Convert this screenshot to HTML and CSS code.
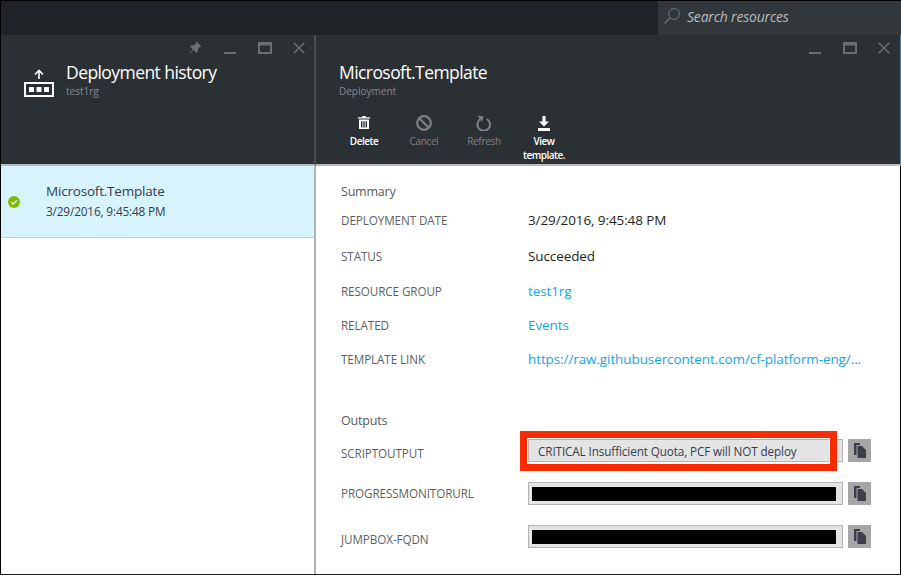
FILE: index.html
```html
<!DOCTYPE html>
<html lang="en">
<head>
<meta charset="utf-8">
<title>Deployment history</title>
<link rel="stylesheet" href="styles.css">
</head>
<body>
<div class="portal">
  <header class="topbar">
    <div class="search">
      <svg class="search-icon" width="16" height="16" viewBox="0 0 16 16"><circle cx="10" cy="6" r="5.4" fill="none" stroke="#73787b" stroke-width="1"/><path d="M6.2 9.8 L0.5 15.5" stroke="#73787b" stroke-width="1.2"/></svg>
      <span class="search-text">Search resources</span>
    </div>
  </header>
  <div class="blades">
    <section class="blade blade-left">
      <div class="blade-head head-left">
        <div class="win-controls">
          <svg class="win-icon pin" width="14" height="14" viewBox="0 0 14 14"><path d="M8.5 0.5 L13.5 5.5 L11.8 6 L9.8 8 L9.6 11 L8.5 12 L2 5.5 L3 4.4 L6 4.2 L8 2.2 Z M4.5 8.5 L1 13 L5.5 9.5 Z" fill="#6b6f72"/></svg>
          <svg class="win-icon min" width="12" height="14" viewBox="0 0 12 14"><rect x="0" y="11" width="12" height="2" fill="#6b6f72"/></svg>
          <svg class="win-icon max" width="14" height="12" viewBox="0 0 14 12"><path d="M0 0H14V12H0Z M2 3.5V10H12V3.5Z" fill="#6b6f72" fill-rule="evenodd"/></svg>
          <svg class="win-icon close" width="12" height="12" viewBox="0 0 12 12"><path d="M0.7 0.7 L11.3 11.3 M11.3 0.7 L0.7 11.3" stroke="#6b6f72" stroke-width="1.6"/></svg>
        </div>
        <div class="title-row">
          <svg class="deploy-icon" width="30" height="28" viewBox="0 0 30 28"><path d="M15 10 V1.5 M11 5.5 L15 1.5 L19 5.5" fill="none" stroke="#fff" stroke-width="1.6"/><path d="M0 13H30V28H0Z M2 15V26H28V15Z" fill="#fff" fill-rule="evenodd"/><rect x="5" y="18" width="5" height="5" fill="#fff"/><rect x="12.5" y="18" width="5" height="5" fill="#fff"/><rect x="20" y="18" width="5" height="5" fill="#fff"/></svg>
          <div>
            <h1 class="blade-title">Deployment history</h1>
            <p class="blade-sub">test1rg</p>
          </div>
        </div>
      </div>
      <div class="blade-body">
        <div class="item">
          <svg class="ok-icon" width="12" height="12" viewBox="0 0 13 13"><circle cx="6.5" cy="6.5" r="6.5" fill="#7fba00"/><path d="M3.5 6.8 L5.6 8.8 L9.6 4.6" fill="none" stroke="#fff" stroke-width="1.5"/></svg>
          <div class="item-text">
            <div class="item-name">Microsoft.Template</div>
            <div class="item-date">3/29/2016, 9:45:48 PM</div>
          </div>
        </div>
      </div>
    </section>
    <section class="blade blade-right">
      <div class="blade-head head-right">
        <div class="win-controls">
          <svg class="win-icon min" width="12" height="14" viewBox="0 0 12 14"><rect x="0" y="11" width="12" height="2" fill="#6b6f72"/></svg>
          <svg class="win-icon max" width="14" height="12" viewBox="0 0 14 12"><path d="M0 0H14V12H0Z M2 3.5V10H12V3.5Z" fill="#6b6f72" fill-rule="evenodd"/></svg>
          <svg class="win-icon close" width="12" height="12" viewBox="0 0 12 12"><path d="M0.7 0.7 L11.3 11.3 M11.3 0.7 L0.7 11.3" stroke="#6b6f72" stroke-width="1.6"/></svg>
        </div>
        <h1 class="blade-title">Microsoft.Template</h1>
        <p class="blade-sub">Deployment</p>
        <div class="commands">
          <div class="cmd">
            <svg width="16" height="16" viewBox="0 0 16 16"><path d="M6.3 1H9.7V2.2H14V3.6H2V2.2H6.3Z M3 4.6H13V14H3Z M5 6.2V12.6H6.4V6.2Z M7.3 6.2V12.6H8.7V6.2Z M9.6 6.2V12.6H11V6.2Z" fill="#fff" fill-rule="evenodd"/></svg>
            <span class="cmd-label on">Delete</span>
          </div>
          <div class="cmd">
            <svg width="16" height="16" viewBox="0 0 16 16"><circle cx="8" cy="8" r="6.8" fill="none" stroke="#7f8285" stroke-width="2.2"/><path d="M3.2 3.2 L12.8 12.8" stroke="#7f8285" stroke-width="2.2"/></svg>
            <span class="cmd-label">Cancel</span>
          </div>
          <div class="cmd">
            <svg width="16" height="16" viewBox="0 0 16 16"><path d="M10.8 4 A6.3 6.3 0 1 1 4.2 4.2" fill="none" stroke="#7f8285" stroke-width="2"/><path d="M1.5 0.5 L7.5 1.5 L6 7 Z" fill="#7f8285"/></svg>
            <span class="cmd-label">Refresh</span>
          </div>
          <div class="cmd">
            <svg width="16" height="16" viewBox="0 0 16 16"><path d="M6.5 1H9.5V6.5H13L8 11.5L3 6.5H6.5Z M2 13H14V16H2Z" fill="#fff"/></svg>
            <span class="cmd-label on">View<br>template.</span>
          </div>
        </div>
      </div>
      <div class="details">
        <h2 class="section">Summary</h2>
        <dl class="rows">
          <div class="row"><dt>DEPLOYMENT DATE</dt><dd>3/29/2016, 9:45:48 PM</dd></div>
          <div class="row gap-2"><dt>STATUS</dt><dd>Succeeded</dd></div>
          <div class="row gap-1"><dt>RESOURCE GROUP</dt><dd class="link">test1rg</dd></div>
          <div class="row"><dt>RELATED</dt><dd class="link">Events</dd></div>
          <div class="row"><dt>TEMPLATE LINK</dt><dd class="link">https://raw.githubusercontent.com/cf-platform-eng/...</dd></div>
        </dl>
        <h2 class="section outputs">Outputs</h2>
        <div class="out">
          <div class="out-row">
            <span class="out-label low">SCRIPTOUTPUT</span>
            <div class="field"><span class="field-text">CRITICAL Insufficient Quota, PCF will NOT deploy</span><div class="callout"></div></div>
            <div class="copy"><svg width="12" height="15" viewBox="0 0 12 15"><path d="M0 0H6V2H2.5V12H0Z M3.5 3H8L12 7V15H3.5Z" fill="#3b3f4a"/></svg></div>
          </div>
          <div class="out-row">
            <span class="out-label high">PROGRESSMONITORURL</span>
            <div class="field"><div class="redact"></div></div>
            <div class="copy"><svg width="12" height="15" viewBox="0 0 12 15"><path d="M0 0H6V2H2.5V12H0Z M3.5 3H8L12 7V15H3.5Z" fill="#3b3f4a"/></svg></div>
          </div>
          <div class="out-row">
            <span class="out-label low">JUMPBOX-FQDN</span>
            <div class="field"><div class="redact"></div></div>
            <div class="copy"><svg width="12" height="15" viewBox="0 0 12 15"><path d="M0 0H6V2H2.5V12H0Z M3.5 3H8L12 7V15H3.5Z" fill="#3b3f4a"/></svg></div>
          </div>
        </div>
      </div>
    </section>
  </div>
</div>
</body>
</html>
```
FILE: styles.css
```css
* { box-sizing: border-box; }
html, body { margin: 0; padding: 0; }
body {
  width: 901px;
  height: 575px;
  overflow: hidden;
  background: #fff;
  font-family: "Open Sans", "Noto Sans", sans-serif;
}
.portal {
  width: 901px;
  height: 575px;
  display: flex;
  flex-direction: column;
  border-top: 1px solid #000;
  border-left: 1px solid #000;
  border-bottom: 1px solid #1c1f22;
}
.topbar {
  height: 34px;
  background: #202327;
  display: flex;
  justify-content: flex-end;
  flex: none;
}
.search {
  width: 243px;
  background: #32373b;
  display: flex;
  align-items: center;
  padding: 0 0 4px 6px;
  gap: 7px;
}
.search-text {
  color: #b9bcbe;
  font-style: italic;
  font-size: 14px;
  letter-spacing: -0.2px;
}
.blades { flex: 1; display: flex; min-height: 0; }
.blade { display: flex; flex-direction: column; }
.blade-left { width: 315px; flex: none; }
.blade-right { flex: 1; min-width: 0; }
.blade-head {
  height: 131px;
  flex: none;
  background: #2b3034;
  border-bottom: 2px solid #b9bcbe;
}
.head-left { border-right: 2px solid #4a4f53; }
.blade-body { flex: 1; border-right: 2px solid #b4b4b4; }
.win-controls {
  height: 14px;
  margin-top: 6px;
  display: flex;
  align-items: center;
  justify-content: flex-end;
  padding-right: 9px;
}
.win-icon { display: block; flex: none; }
.pin { margin-right: 22px; }
.min { margin-right: 22px; }
.max { margin-right: 21px; }
.title-row { display: flex; margin: 4px 0 0 23px; gap: 12px; }
.deploy-icon { margin-top: 10px; }
.blade-title {
  margin: 0;
  color: #fff;
  font-size: 17.5px;
  font-weight: 400;
  line-height: 26px;
  letter-spacing: -0.57px;
}
.blade-sub {
  margin: 0;
  color: #878b8e;
  font-size: 10px;
  line-height: 13px;
}
.head-right { padding-left: 23px; border-right: 1px solid #4e7f9c; }
.head-right .win-controls { padding-right: 10px; }
.head-right .blade-title { margin-top: 4px; }
.commands { display: flex; margin: 17px 0 0 -5px; }
.cmd {
  width: 60px;
  display: flex;
  flex-direction: column;
  align-items: center;
  gap: 3px;
}
.cmd-label {
  color: #7f8285;
  font-size: 10px;
  line-height: 14px;
  text-align: center;
  letter-spacing: -0.3px;
}
.cmd-label.on { color: #fff; font-weight: 600; letter-spacing: -0.5px; }
.item {
  height: 72px;
  background: #d7f4fc;
  border-bottom: 1px solid #c4cdd0;
  display: flex;
  align-items: center;
  padding-left: 7px;
}
.ok-icon { flex: none; margin-top: 1px; }
.item-text { margin-left: 26px; }
.item-name {
  color: #333c50;
  font-size: 13.5px;
  line-height: 20px;
  letter-spacing: -0.2px;
}
.item-date {
  color: #333c50;
  font-size: 11.8px;
  line-height: 21px;
  letter-spacing: -0.15px;
}
.details {
  flex: 1;
  padding: 18px 0 0 25px;
  min-height: 0;
  border-right: 1px solid #000;
}
.section {
  margin: 0;
  color: #555b60;
  font-size: 12.5px;
  font-weight: 400;
  line-height: 16px;
  letter-spacing: -0.2px;
}
.rows { margin: 0; padding-top: 3px; }
.row {
  display: grid;
  grid-template-columns: 187px 1fr;
  align-items: center;
  height: 34px;
}
.gap-2 { margin-top: 2px; }
.gap-1 { margin-top: 1px; }
dt {
  color: #5c5f63;
  font-size: 11.7px;
  letter-spacing: -0.1px;
}
dd {
  margin: 0;
  color: #1d1f22;
  font-size: 13.5px;
  white-space: nowrap;
  letter-spacing: -0.1px;
}
dd.link { color: #15a4ea; }
.outputs { margin-top: 37px; }
.out { margin-top: 10px; display: flex; flex-direction: column; gap: 20px; }
.out-row { display: flex; align-items: center; height: 23px; }
.out-label {
  width: 187px;
  flex: none;
  color: #5c5f63;
  font-size: 11.7px;
  letter-spacing: -0.1px;
}
.low { padding-top: 4px; }
.high { padding-bottom: 2px; }
.field {
  width: 315px;
  height: 23px;
  flex: none;
  background: #e4e4e4;
  border: 1px solid #b4b4b4;
  position: relative;
  display: flex;
  align-items: center;
  padding: 0 6px 0 3px;
}
.field-text {
  color: #333c50;
  font-size: 11.7px;
  padding-left: 6px;
  letter-spacing: -0.1px;
  white-space: nowrap;
}
.redact { width: 100%; height: 14px; background: #000; }
.callout {
  position: absolute;
  left: -9px;
  top: -9px;
  width: 317px;
  height: 40px;
  border: 7px solid #f92b02;
  box-shadow: inset 0 0 0 1px #fff;
}
.copy {
  width: 23px;
  height: 23px;
  margin-left: 5px;
  background: #a6a6a6;
  display: flex;
  align-items: center;
  justify-content: center;
}
```
